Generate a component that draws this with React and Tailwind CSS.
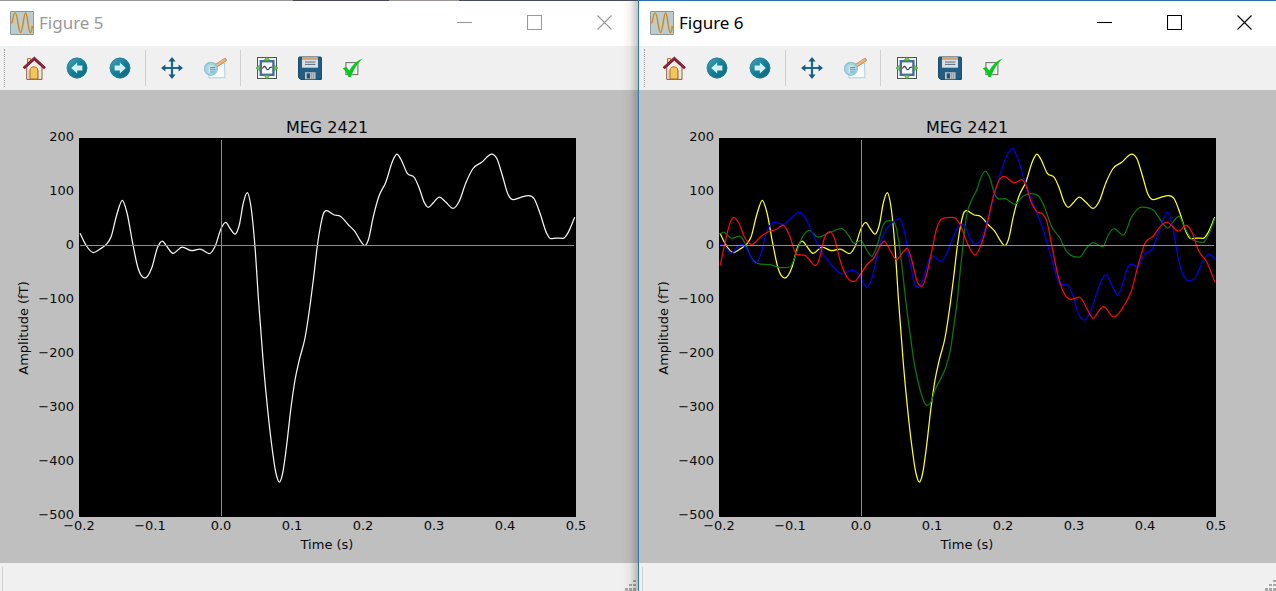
import React from "react";

const MAIN = [
  [80, 233.3], [86.5, 246], [93.3, 252.5], [100, 249], [106, 244.7], [111, 237], [116.7, 215], [122.3, 200.3],
  [126.8, 212], [133, 245], [138, 268], [145, 278], [151.7, 268], [157.7, 247], [162.3, 241], [166.5, 246],
  [173, 253.3], [182.3, 247], [191.7, 250.7], [200, 249], [209.3, 253.7], [215, 246.5], [221.3, 228],
  [225.7, 222.3], [230, 228.3], [235, 234], [239.3, 225], [243.3, 203], [247.3, 192.5], [250.7, 205],
  [255, 247], [258.5, 300], [263.3, 363], [267.7, 410], [271.7, 445], [275.7, 472], [279.4, 482],
  [282.7, 473], [286.7, 445], [290.7, 410], [295, 380], [299.3, 360], [305, 338], [310.5, 302], [313.7, 277],
  [317.3, 246], [320.7, 225], [323.3, 214], [326.3, 210.7], [334.3, 215], [340.3, 216.3], [348.3, 224.7],
  [355, 231.7], [361, 241.7], [364.7, 245.7], [368.3, 240], [373.3, 216.7], [378.7, 196.7], [386, 181.7],
  [392.7, 160.7], [397, 154], [400.7, 159], [407.3, 173.3], [414.7, 178], [419.3, 188.3], [424.7, 203.3],
  [428.3, 207.3], [433.3, 202.7], [439.3, 197], [446, 202.3], [453, 208.3], [459, 201.7], [465.7, 183.3],
  [472.7, 169], [481.7, 162.3], [491.7, 154], [496.7, 158.3], [502.7, 176.7], [508, 194.3], [513.3, 199.7],
  [520.7, 197.3], [528.7, 195.7], [534.3, 199], [540, 213.3], [546.7, 233.3], [550.7, 238.7], [556.7, 238],
  [563.3, 238.3], [567.7, 233.3], [574.7, 217.3],
];

const RED = [
  [80.3, 265], [86, 238.3], [90.3, 222.3], [94, 217.3], [99, 223.3], [105, 238.3], [112.3, 244.3],
  [120, 237.3], [127.7, 232], [136.7, 229.3], [143.3, 225], [149, 234.3], [156.7, 254.3], [165, 255.3],
  [175.7, 265.7], [180, 256.7], [184.3, 238.3], [190.3, 231.7], [195, 240], [200, 260], [206.7, 276.7],
  [214, 281.7], [220, 275], [226.7, 265], [234.3, 257.3], [240.7, 245], [244.2, 241], [250, 250],
  [256.7, 259.7], [262, 253.3], [267.3, 248.3], [271.7, 260], [277.3, 281.7], [282, 286.3], [286, 276.7],
  [291.7, 251.7], [296.7, 228.3], [302.7, 218.3], [313.3, 217.3], [320, 224.3], [327.3, 243.3], [335, 255],
  [341, 245], [347.3, 223.3], [353.3, 196.7], [359.3, 180], [364, 176.3], [374.3, 182.7], [381.7, 179.7],
  [385.7, 185], [391, 201.7], [396.7, 211.7], [402.7, 214], [406.7, 221], [412.3, 248.3], [418.3, 276.7],
  [423.3, 291.7], [431, 299.3], [439.7, 297], [446.7, 308.3], [453.3, 318.3], [458.3, 311.7],
  [463.3, 306.7], [474, 317], [483.3, 306.7], [491.7, 290], [497.7, 266.7], [505, 243.3], [513.3, 236],
  [520, 226.7], [526.7, 222], [538.3, 231], [546.7, 225.3], [551.7, 231.7], [558.3, 250], [566.7, 261.7],
  [575, 282.3],
];

const BLUE = [
  [80.3, 243.7], [85, 246.7], [91, 253.7], [96.7, 247.7], [101.7, 244.3], [106.7, 249], [115.7, 263.7],
  [121, 253.3], [126.7, 231.7], [134.3, 222.3], [143.3, 224.3], [151.7, 217.7], [159.3, 212],
  [165.7, 218.3], [173.3, 235], [181.7, 251.7], [191.7, 265], [202.3, 274], [211.7, 270], [219, 274.3],
  [226.7, 287.3], [232.3, 276.7], [238.3, 250], [243.7, 234], [248.3, 226.7], [255, 220.7],
  [259.3, 218.3], [263.3, 226.7], [269.3, 258.3], [274, 281.7], [278.7, 287.3], [285, 273.3], [291, 255],
  [296, 257.7], [301, 261.7], [306.7, 253.3], [313.3, 236.7], [320, 224.3], [324, 225], [330, 238.3],
  [335.7, 244], [341.7, 238.3], [348.3, 216.7], [356.7, 186.7], [365, 160], [372.3, 148.3], [378.3, 160],
  [385, 181.7], [395, 208.3], [403.3, 230], [410, 253.3], [413.3, 265], [420, 284.3], [427.7, 285],
  [433.3, 296.7], [438.3, 313.3], [444.3, 320], [451.7, 308.3], [459, 286.7], [466, 274.7], [471.7, 285],
  [477.7, 294.7], [482.3, 285], [487.3, 268.3], [491, 264], [497.3, 266.7], [504.3, 255], [513.3, 247.3],
  [520, 228.3], [527.3, 212], [532.3, 225], [538.3, 258.3], [543.3, 275], [549, 281], [556.7, 275],
  [563.3, 260], [569, 254], [575, 259.3],
];

const GREEN = [
  [80.3, 234], [83.3, 232], [91.7, 238.3], [100, 236], [105, 243.3], [111.7, 258.3], [118.3, 263.7],
  [130, 264.7], [141.7, 267.7], [150, 267], [155, 256.7], [161.7, 238.3], [169.3, 230.3], [177.7, 237],
  [190, 232.3], [201.7, 228.7], [208.3, 235], [214.3, 243.3], [220.7, 240.7], [226.7, 250], [231.7, 256.3],
  [236.7, 246.7], [243.5, 224.5], [248.3, 220.7], [254, 222.3], [258.3, 238.3], [262.5, 271], [265.7, 300],
  [270, 333], [274, 361.7], [279.3, 386.7], [284, 401.7], [287, 405.3], [291.3, 401.3], [295, 390],
  [300, 380], [306, 366.7], [310.7, 348.3], [314, 325], [317.3, 300], [319.2, 281], [322.3, 251.7],
  [326.7, 215], [331.7, 200], [336.7, 190], [341, 177.3], [345.3, 171], [350, 178.3], [355, 195],
  [359, 199], [365, 198.7], [374.7, 204.3], [383.3, 196], [390, 193.7], [398.3, 195.7], [404.3, 206.7],
  [411.7, 226.7], [420, 238.3], [426.7, 251.7], [439.7, 257], [446.7, 247.7], [453.3, 242.7],
  [462.7, 246.7], [468.3, 235], [474, 228.7], [483.3, 235], [491.7, 216.7], [501.7, 207], [513.3, 210],
  [521.7, 221.7], [527.7, 228], [533.3, 221.7], [539, 216], [544.3, 226.7], [551.7, 239], [563.3, 242.3],
  [568.3, 235], [575, 218.3],
];

// Cubic interpolation with flat peaks; slopes are limited so that no segment overshoots.
function curve(points) {
  const widths = [];
  const slopes = [];
  for (let i = 0; i < points.length - 1; i++) {
    widths.push(points[i + 1][0] - points[i][0]);
    slopes.push((points[i + 1][1] - points[i][1]) / widths[i]);
  }
  const tangents = points.map((_, i) => {
    if (i === 0) return slopes[0];
    if (i === points.length - 1) return slopes[i - 1];
    const a = slopes[i - 1];
    const b = slopes[i];
    if (a * b <= 0) return 0;
    const mean = (a * widths[i] + b * widths[i - 1]) / (widths[i - 1] + widths[i]);
    const limit = 3 * Math.min(Math.abs(a), Math.abs(b));
    return Math.sign(mean) * Math.min(Math.abs(mean), limit);
  });
  let d = `M${points[0][0]} ${points[0][1]}`;
  for (let i = 0; i < points.length - 1; i++) {
    const [x0, y0] = points[i];
    const [x1, y1] = points[i + 1];
    const h = widths[i] / 3;
    d += `C${x0 + h} ${y0 + tangents[i] * h} ${x1 - h} ${y1 - tangents[i + 1] * h} ${x1} ${y1}`;
  }
  return d;
}

const X_TICKS = ["−0.2", "−0.1", "0.0", "0.1", "0.2", "0.3", "0.4", "0.5"];
const Y_TICKS = ["200", "100", "0", "−100", "−200", "−300", "−400", "−500"];

function Plot({ series }) {
  return (
    <svg
      viewBox="0 0 636 473"
      className="block h-auto w-full"
      fontFamily="'DejaVu Sans', sans-serif"
      fontSize="13"
      fill="#0a0a0a"
      role="img"
      aria-label="MEG 2421"
    >
      <text x="327" y="43" fontSize="16" textAnchor="middle">MEG 2421</text>
      <rect x="79" y="48" width="497" height="379" fill="#000" />
      {series.map((s) => (
        <path
          key={s.color}
          d={curve(s.points)}
          transform="translate(0 -90)"
          fill="none"
          stroke={s.color}
          strokeWidth="1.25"
          strokeLinejoin="round"
        />
      ))}
      <path d="M80 155.5H574M221.5 50V426" stroke="#8c8c8c" strokeWidth="1" fill="none" />
      {X_TICKS.map((t, i) => (
        <text key={t} x={79 + i * 71} y="440" textAnchor="middle">{t}</text>
      ))}
      {Y_TICKS.map((t, i) => (
        <text key={t} x="74" y={51 + i * 54} textAnchor="end">{t}</text>
      ))}
      <text x="327" y="459" textAnchor="middle">Time (s)</text>
      <text transform="translate(28 238) rotate(-90)" textAnchor="middle">Amplitude (fT)</text>
    </svg>
  );
}

function Icon({ children }) {
  return (
    <svg viewBox="0 0 24 24" className="size-6" fill="none" aria-hidden="true">
      {children}
    </svg>
  );
}

function AppIcon() {
  return (
    <Icon>
      <rect x="0.5" y="0.5" width="23" height="23" rx="0.5" fill="#bccccd" stroke="#8b979b" />
      <path
        d="M2 12.5C3 5 4 2 5.2 2C7.6 2 8.4 21.5 10.4 21.5C12.8 21.5 13.6 2 15.6 2C17.8 2 18 21.5 20.4 21.5C21.4 21.5 22 18 22.3 15"
        stroke="#d08a1c"
        strokeWidth="1.5"
      />
    </Icon>
  );
}

function HomeIcon() {
  return (
    <Icon>
      <path d="M5.5 10V2.5H8.6V8" fill="#f3d9a5" stroke="#b0713a" />
      <path d="M4.7 11L12.3 4L20 11V23.4H4.7Z" fill="#f2ece2" stroke="#8a5a50" />
      <path d="M8 23V14C8 9.8 15.8 9.8 15.8 14V23Z" fill="#f3c65c" stroke="#a8702c" />
      <path d="M16.6 14V23M7 14V23" stroke="#c0876c" strokeWidth="0.6" />
      <path d="M1.6 12.3L12.3 2.4L23 12.3" stroke="#7c1c34" strokeWidth="2.8" />
      <path d="M2.6 10.9L12.3 2L22 10.9" stroke="#a5344c" strokeWidth="0.8" />
    </Icon>
  );
}

function ArrowIcon({ id, flip }) {
  return (
    <Icon>
      <defs>
        <linearGradient id={id} x1="0" y1="0" x2="1" y2="1">
          <stop offset="0" stopColor="#4aa7b8" />
          <stop offset="0.5" stopColor="#137f97" />
          <stop offset="1" stopColor="#0c6480" />
        </linearGradient>
      </defs>
      <circle cx="12" cy="12" r="10.4" fill={`url(#${id})`} />
      <circle cx="12" cy="12" r="9.8" stroke="#2d7d98" strokeWidth="0.8" />
      <path
        d="M6.2 12L12.2 6.4V9.6H17.4V14.4H12.2V17.6Z"
        fill="#d4eff0"
        transform={flip ? "matrix(-1 0 0 1 24 0)" : undefined}
      />
    </Icon>
  );
}

function PanIcon() {
  return (
    <Icon>
      <path d="M12 3V21M3 12H21" stroke="#1a688d" strokeWidth="2.2" />
      <path
        d="M12 1L15.6 5.4H8.4ZM12 23L15.6 18.6H8.4ZM1 12L5.4 8.4V15.6ZM23 12L18.6 8.4V15.6Z"
        fill="#155d82"
      />
    </Icon>
  );
}

function ZoomIcon() {
  return (
    <Icon>
      <path d="M6 22L5.5 8L21.5 7L22 21.6Z" fill="#f7fbfc" stroke="#a5cbd5" strokeWidth="0.9" />
      <path d="M13.4 9.6L21.8 4" stroke="#b9875c" strokeWidth="3.8" strokeLinecap="round" />
      <path d="M13.8 9.2L21.6 4" stroke="#f2b57a" strokeWidth="2.3" strokeLinecap="round" />
      <circle cx="7.9" cy="12.8" r="6.5" fill="#a9d3dd" stroke="#8fc3d0" strokeWidth="1.2" />
      <path d="M5.6 9.6H9.8L12 11.6V17H5.6Z" fill="#c9e6ec" />
      <path d="M7 11.6H12M7 13.8H12.4M7 16H12" stroke="#4c9db2" strokeWidth="1.1" />
    </Icon>
  );
}

function SubplotsIcon() {
  return (
    <Icon>
      <rect x="2.5" y="1.5" width="19" height="21" fill="#f4f6f2" stroke="#4b5552" />
      <rect x="5.8" y="5.2" width="12.6" height="13.6" fill="#f4f8fa" stroke="#4a6ca8" strokeWidth="2.4" />
      <path d="M7.4 12.6C9 9.4 10 10 11.2 12.2S13.6 14.4 14.6 11.6L17 11" stroke="#333" strokeWidth="1.1" />
      <path
        d="M12 0.9L14.8 4.4H9.2ZM12 23.1L14.8 19.2H9.2ZM1 12L4.8 9.2V14.8ZM23 12L19.2 9.2V14.8Z"
        fill="#7ad257"
        stroke="#3b9a32"
        strokeWidth="0.8"
      />
    </Icon>
  );
}

function SaveIcon() {
  return (
    <Icon>
      <path d="M0.6 2Q0.6 1 1.6 1H22.4Q23.4 1 23.4 2V23.4H2.6L0.6 21.4Z" fill="#215d84" stroke="#174564" />
      <rect x="4" y="1.3" width="16" height="10.4" fill="#d7dfe2" />
      <rect x="4" y="1.3" width="16" height="2.6" fill="#dda36f" />
      <path d="M7 6H17.4M7 8.4H17.4" stroke="#49616e" strokeWidth="0.9" />
      <rect x="7" y="16.2" width="10.6" height="7" fill="#b9bfc4" />
      <rect x="8.8" y="17.4" width="3.2" height="5" fill="#2d4f66" />
      <path d="M13.6 16.4V23M15.6 16.4V23" stroke="#8b959b" strokeWidth="0.7" />
    </Icon>
  );
}

function CheckIcon() {
  return (
    <Icon>
      <rect x="4.9" y="6.6" width="12" height="12" fill="#efefef" stroke="#6c6c6c" />
      <path d="M1.8 12.6L5 10.8L8.4 14.6C11.6 9 15.4 5 21.8 2.6C16.6 7.4 12.8 13 9.8 21H7.4C6.2 17.4 4.2 14.6 1.8 12.6Z" fill="#08c81e" />
    </Icon>
  );
}

function ToolButton({ label, children }) {
  return (
    <button type="button" aria-label={label} className="flex h-9 w-[43px] items-center justify-center">
      {children}
    </button>
  );
}

function Separator() {
  return <div className="mx-1 h-9 w-px bg-[#cfcfcf]" />;
}

function Toolbar({ name }) {
  return (
    <div className="flex h-11 items-center bg-[#f0f0f0] pl-1" role="toolbar" aria-label={name}>
      <div className="mr-[7px] h-[38px] border-l border-dotted border-[#a0a0a0]" />
      <ToolButton label="Home"><HomeIcon /></ToolButton>
      <ToolButton label="Back"><ArrowIcon id={`${name}-back`} /></ToolButton>
      <ToolButton label="Forward"><ArrowIcon id={`${name}-forward`} flip /></ToolButton>
      <Separator />
      <ToolButton label="Pan"><PanIcon /></ToolButton>
      <ToolButton label="Zoom"><ZoomIcon /></ToolButton>
      <Separator />
      <ToolButton label="Configure subplots"><SubplotsIcon /></ToolButton>
      <ToolButton label="Save"><SaveIcon /></ToolButton>
      <ToolButton label="Edit"><CheckIcon /></ToolButton>
    </div>
  );
}

function WindowControls() {
  const shapes = [
    ["Minimize", "M0 7.5H15"],
    ["Maximize", "M0.5 0.5H14.5V14.5H0.5Z"],
    ["Close", "M0.5 0.5L14.5 14.5M14.5 0.5L0.5 14.5"],
  ];
  return (
    <div className="flex gap-1.5">
      {shapes.map(([label, d]) => (
        <button key={label} type="button" aria-label={label} className="flex h-[43px] w-16 items-center justify-center">
          <svg viewBox="0 0 15 15" className="size-[15px]" fill="none" stroke="currentColor" strokeWidth="1.1" aria-hidden="true">
            <path d={d} />
          </svg>
        </button>
      ))}
    </div>
  );
}

function SizeGrip() {
  return (
    <svg viewBox="0 0 11 12" className="h-3 w-[11px]" fill="#a6a6a6" aria-hidden="true">
      <path d="M8 1h3v2h-3zM4 5h3v2h-3zM8 5h3v2h-3zM0 9h3v3h-3zM4 9h3v3h-3zM8 9h3v3h-3z" />
    </svg>
  );
}

function FigureWindow({ title, id, active, series }) {
  return (
    <section
      className={
        active
          ? "relative flex flex-col border-l border-[#2a7ab8] bg-[#f0f0f0]"
          : "relative flex flex-col bg-[#f0f0f0]"
      }
    >
      {active ? (
        <div className="h-px bg-[#2a6fb0]" />
      ) : (
        <div className="flex h-px">
          <div className="w-[46%] bg-[#969696]" />
          <div className="w-[15%] bg-[#4a4a5c]" />
          <div className="w-[11%] bg-[#9a9496]" />
          <div className="flex-1 bg-[#474c58]" />
        </div>
      )}
      <header
        className={
          active
            ? "flex h-[45px] items-start bg-white pl-[11px] text-black"
            : "flex h-[45px] items-start bg-white pr-0.5 pl-2.5 text-[#999999]"
        }
      >
        <div className="flex h-[43px] flex-1 items-center gap-[5px]">
          <AppIcon />
          <h1 className="font-['Noto_Sans',sans-serif] text-[17px] leading-6">{title}</h1>
        </div>
        <WindowControls />
      </header>
      <div className={active ? "bg-[#f0f0f0] pl-px" : "bg-[#f0f0f0]"}>
        <Toolbar name={id} />
      </div>
      <main className={active ? "bg-[#bfbfbf] pl-px" : "bg-[#bfbfbf] pr-0.5"}>
        <Plot series={series} />
      </main>
      <footer
        className={
          active
            ? "flex min-h-7 flex-1 items-end pt-1 pl-[3px]"
            : "flex min-h-7 flex-1 items-end pt-1 pr-0.5 pl-0.5"
        }
      >
        <div className="flex-1 self-stretch border-l border-[#d0d0d0]" />
        <SizeGrip />
      </footer>
      {!active && (
        <div className="pointer-events-none absolute top-px right-0 bottom-0 w-4 bg-linear-to-r from-transparent via-[#5a3c2810] to-[#3c281e48]" />
      )}
    </section>
  );
}

export default function App() {
  return (
    <div className="grid min-h-screen grid-cols-2 bg-[#f0f0f0]">
      <FigureWindow id="figure-5" title="Figure 5" series={[{ color: "#f5f5f5", points: MAIN }]} />
      <FigureWindow
        id="figure-6"
        title="Figure 6"
        active
        series={[
          { color: "#ffff20", points: MAIN },
          { color: "#0a7a0a", points: GREEN },
          { color: "#0000f0", points: BLUE },
          { color: "#fa0808", points: RED },
        ]}
      />
    </div>
  );
}
